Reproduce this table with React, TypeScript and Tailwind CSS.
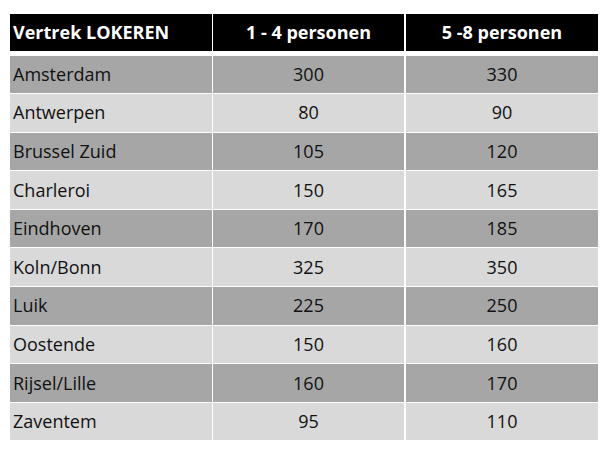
import React from 'react';

const rows: [string, number, number][] = [
  ['Amsterdam', 300, 330],
  ['Antwerpen', 80, 90],
  ['Brussel Zuid', 105, 120],
  ['Charleroi', 150, 165],
  ['Eindhoven', 170, 185],
  ['Koln/Bonn', 325, 350],
  ['Luik', 225, 250],
  ['Oostende', 150, 160],
  ['Rijsel/Lille', 160, 170],
  ['Zaventem', 95, 110],
];

export default function App() {
  return (
    <div
      className="w-[610px] h-[457px] bg-white pt-[14px] pl-[10px]"
      style={{ fontFamily: '"Open Sans", "Liberation Sans", sans-serif' }}
    >
      <div className="w-[588px]">
        <div className="grid grid-cols-[202px_1px_191px_2px_192px] h-[37px] text-white font-bold text-[18px]">
          <div className="bg-black flex items-center pl-[3px]">Vertrek LOKEREN</div>
          <div />
          <div className="bg-black flex items-center justify-center">1 - 4 personen</div>
          <div />
          <div className="bg-black flex items-center justify-center">5 -8 personen</div>
        </div>
        <div className="mt-[4.5px] flex flex-col gap-y-[1px] text-[18px] text-[#111]">
          {rows.map(([city, a, b], i) => {
            const bg = i % 2 === 0 ? 'bg-[#a6a6a6]' : 'bg-[#d9d9d9]';
            return (
              <div key={city} className="grid grid-cols-[202px_1px_191px_2px_192px] h-[37.6px]">
                <div className={`${bg} flex items-center pl-[3px]`}>{city}</div>
                <div />
                <div className={`${bg} flex items-center justify-center`}>{a}</div>
                <div />
                <div className={`${bg} flex items-center justify-center`}>{b}</div>
              </div>
            );
          })}
        </div>
      </div>
    </div>
  );
}
